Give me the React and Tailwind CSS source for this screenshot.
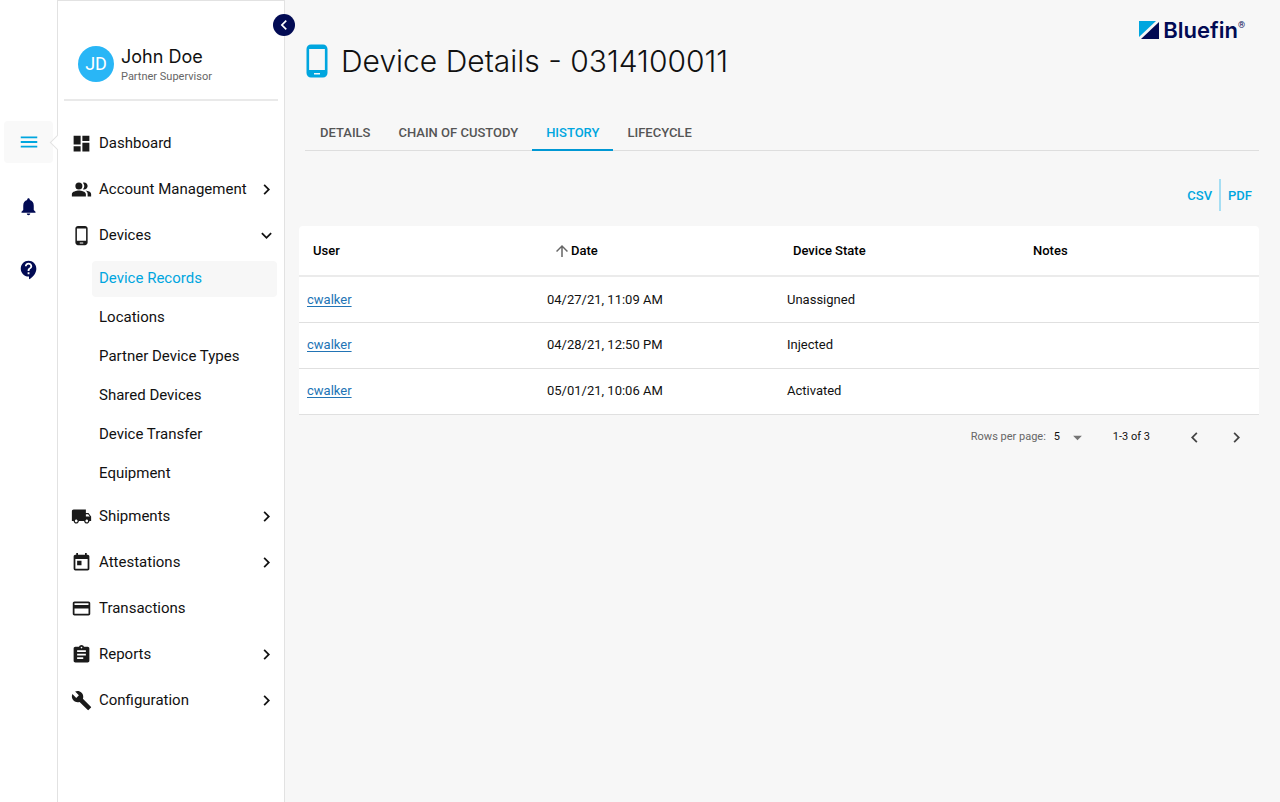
import React from "react";
import {
  MdArrowDropDown,
  MdArrowUpward,
  MdAssignment,
  MdBuild,
  MdChevronLeft,
  MdChevronRight,
  MdContactSupport,
  MdCreditCard,
  MdDashboard,
  MdExpandMore,
  MdLocalShipping,
  MdMenu,
  MdNotifications,
  MdPeopleAlt,
  MdPhoneAndroid,
  MdToday,
} from "react-icons/md";

const navItems = [
  { label: "Dashboard", icon: MdDashboard },
  { label: "Account Management", icon: MdPeopleAlt, expandable: true },
  {
    label: "Devices",
    icon: MdPhoneAndroid,
    expandable: true,
    children: [
      "Device Records",
      "Locations",
      "Partner Device Types",
      "Shared Devices",
      "Device Transfer",
      "Equipment",
    ],
  },
  { label: "Shipments", icon: MdLocalShipping, expandable: true },
  { label: "Attestations", icon: MdToday, expandable: true },
  { label: "Transactions", icon: MdCreditCard },
  { label: "Reports", icon: MdAssignment, expandable: true },
  { label: "Configuration", icon: MdBuild, expandable: true },
];

const tabs = ["Details", "Chain of Custody", "History", "Lifecycle"];

const history = [
  { user: "cwalker", date: "04/27/21, 11:09 AM", state: "Unassigned", notes: "" },
  { user: "cwalker", date: "04/28/21, 12:50 PM", state: "Injected", notes: "" },
  { user: "cwalker", date: "05/01/21, 10:06 AM", state: "Activated", notes: "" },
];

function Rail() {
  return (
    <div className="w-[57px] shrink-0 bg-white flex flex-col items-center pt-[121px] text-[#020b54]">
      <button
        aria-label="Menu"
        className="w-[49px] h-[42px] rounded-sm bg-[#f9f9f9] text-[#00a6df] flex items-center justify-center"
      >
        <MdMenu size={22} />
      </button>
      <button aria-label="Notifications" className="mt-8 h-[22px]">
        <MdNotifications size={21} />
      </button>
      <button aria-label="Help" className="mt-[42px] h-[22px]">
        <MdContactSupport size={22} />
      </button>
    </div>
  );
}

function NavItem({ item }) {
  const Icon = item.icon;
  const Arrow = item.children ? MdExpandMore : MdChevronRight;

  return (
    <li>
      <button className="w-full h-[46px] pl-[13px] pr-[7px] flex items-center text-left">
        <Icon size={21} className="shrink-0 text-[#1a1a1a]" />
        <span className="ml-[7px] flex-1">{item.label}</span>
        {item.expandable && <Arrow size={21} className="shrink-0" />}
      </button>

      {item.children && (
        <ul className="pl-[34px] pr-[7px] pt-px">
          {item.children.map((child, i) => (
            <li key={child} className="h-[39px] flex items-center">
              <a
                href="#"
                className={
                  i === 0
                    ? "w-full h-9 pl-[7px] flex items-center rounded-sm bg-[#f7f7f7] text-[#00a6df]"
                    : "w-full h-9 pl-[7px] flex items-center"
                }
              >
                {child}
              </a>
            </li>
          ))}
        </ul>
      )}
    </li>
  );
}

function Sidebar() {
  return (
    <aside className="relative w-[228px] shrink-0 bg-white border-t border-x border-[#e2e2e2]">
      {/* pointer towards the active rail button */}
      <div className="absolute -left-[6px] top-[136px] w-[11px] h-[11px] rotate-45 bg-white border-l border-b border-[#e2e2e2]" />

      <button
        aria-label="Collapse sidebar"
        className="absolute -right-[11px] top-[13px] w-[22px] h-[22px] rounded-full bg-[#020b54] text-white flex items-center justify-center"
      >
        <MdChevronLeft size={20} />
      </button>

      <div className="mx-[6px] pl-[14px] h-[100px] pt-7 border-b-2 border-[#e9e9e9] flex items-center">
        <div className="w-9 h-9 rounded-full bg-[#29b6f6] text-white text-lg flex items-center justify-center">
          JD
        </div>
        <div className="ml-[7px] pt-1">
          <div className="font-['Inter',sans-serif] text-[18px] leading-5">John Doe</div>
          <div className="text-[11px] leading-4 mt-[2px] text-[#666]">Partner Supervisor</div>
        </div>
      </div>

      <nav className="mt-[19px] text-[15px]">
        <ul>
          {navItems.map((item) => (
            <NavItem key={item.label} item={item} />
          ))}
        </ul>
      </nav>
    </aside>
  );
}

function Logo() {
  return (
    <div className="flex items-start text-[#020b54]">
      <svg width="20" height="18" viewBox="0 0 20 18" className="mt-[2px]" aria-hidden="true">
        <path d="M0 0h17L0 16z" fill="#00a6df" />
        <path d="M20 1v17H2z" fill="#020b54" />
      </svg>
      <span className="ml-1 font-['Inter',sans-serif] text-[22px] leading-[22px] font-semibold">
        Bluefin
      </span>
      <span className="text-[9px] leading-[12px]">®</span>
    </div>
  );
}

function HistoryTable() {
  return (
    <table className="w-full table-fixed text-left text-[13px] bg-white rounded-t">
      <thead>
        <tr className="h-[50px] border-b-2 border-[#ebebeb] text-black">
          <th className="pl-[14px] font-medium">User</th>
          <th className="pl-[14px] font-medium">
            <button className="flex items-center font-medium">
              <MdArrowUpward size={18} className="text-[#666]" />
              Date
            </button>
          </th>
          <th className="pl-[14px] font-medium">Device State</th>
          <th className="pl-[14px] font-medium">Notes</th>
        </tr>
      </thead>
      <tbody>
        {history.map((row) => (
          <tr key={row.date} className="h-[46px] border-b border-[#e0e0e0]">
            <td className="pl-2">
              <a href="#" className="text-[#2274b5] underline underline-offset-2">
                {row.user}
              </a>
            </td>
            <td className="pl-2">{row.date}</td>
            <td className="pl-2">{row.state}</td>
            <td className="pl-2">{row.notes}</td>
          </tr>
        ))}
      </tbody>
    </table>
  );
}

function Pagination() {
  return (
    <div className="flex items-center justify-end h-[46px] pr-3 text-[11px]">
      <label htmlFor="rows" className="text-[#666]">
        Rows per page:
      </label>
      <div className="relative ml-2 w-[31px]">
        <select
          id="rows"
          defaultValue="5"
          className="w-full appearance-none bg-transparent outline-none"
        >
          <option>5</option>
          <option>10</option>
          <option>25</option>
        </select>
        <MdArrowDropDown
          size={21}
          className="absolute -right-[3px] -top-[2px] text-[#757575] pointer-events-none"
        />
      </div>
      <span className="ml-7">1-3 of 3</span>
      <button aria-label="Previous page" className="ml-[34px] text-[#444]">
        <MdChevronLeft size={21} />
      </button>
      <button aria-label="Next page" className="ml-[21px] text-[#444]">
        <MdChevronRight size={21} />
      </button>
    </div>
  );
}

export default function App() {
  return (
    <div className="min-h-screen flex bg-[#f7f7f7] font-['Roboto',sans-serif] text-[#111]">
      <Rail />
      <Sidebar />

      <main className="flex-1 min-w-0 pl-[14px] pr-[21px]">
        <header className="flex items-start justify-between pt-[19px] pr-[14px]">
          <div className="flex items-center mt-6">
            <MdPhoneAndroid size={36} className="text-[#00a6df]" />
            <h1 className="ml-[6px] font-['Inter',sans-serif] text-[30px] leading-9 font-light">
              Device Details - 0314100011
            </h1>
          </div>
          <Logo />
        </header>

        <div
          role="tablist"
          className="ml-[6px] mt-9 pl-px flex h-9 border-b border-[#dedede] text-[13px] font-medium uppercase text-[#555]"
        >
          {tabs.map((tab) => (
            <button
              key={tab}
              role="tab"
              aria-selected={tab === "History"}
              className={
                tab === "History"
                  ? "h-9 px-[14px] pt-0.5 uppercase border-b-2 border-[#0098d4] text-[#00a6df]"
                  : "h-9 px-[14px] pt-0.5 uppercase border-b-2 border-transparent"
              }
            >
              {tab}
            </button>
          ))}
        </div>

        <div className="mt-7 flex justify-end text-[13px] font-medium text-[#00a6df]">
          <button className="h-8 px-[7px] pt-0.5 border-r-2 border-[#a6def3]">CSV</button>
          <button className="h-8 px-[7px] pt-0.5">PDF</button>
        </div>

        <div className="mt-[15px]">
          <HistoryTable />
          <Pagination />
        </div>
      </main>
    </div>
  );
}
